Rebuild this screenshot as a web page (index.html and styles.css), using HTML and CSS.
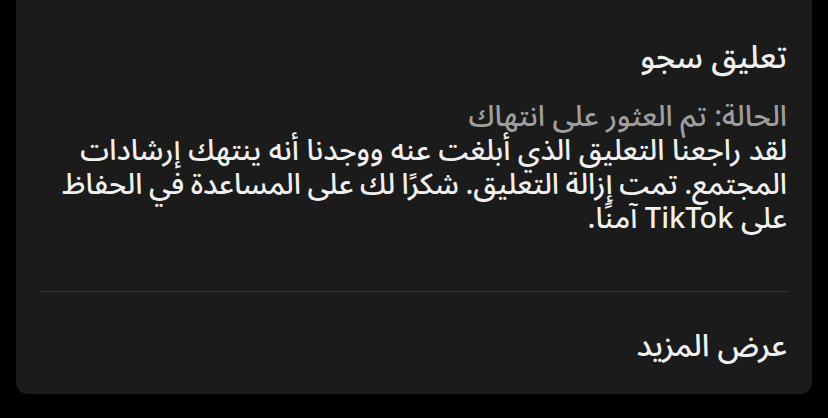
FILE: index.html
```html
<!DOCTYPE html>
<html lang="ar" dir="rtl">
<head>
<meta charset="utf-8">
<link rel="stylesheet" href="styles.css">
</head>
<body>
<div class="card">
  <div class="content">
    <h1 class="title">تعليق سجو</h1>
    <p class="status">الحالة: تم العثور على انتهاك</p>
    <p class="body"><span class="line">لقد راجعنا التعليق الذي أبلغت عنه ووجدنا أنه ينتهك إرشادات</span><span class="line tight">المجتمع. تمت إزالة التعليق. شكرًا لك على المساعدة في الحفاظ</span><span class="line">على TikTok آمنًا.</span></p>
  </div>
  <div class="divider"></div>
  <div class="more">عرض المزيد</div>
</div>
</body>
</html>
```
FILE: styles.css
```css
html, body {
  margin: 0;
  padding: 0;
  background: #000;
}
body {
  width: 828px;
  height: 418px;
  overflow: hidden;
  font-family: "Noto Sans Arabic", "DejaVu Sans", "Noto Sans", sans-serif;
  color: #f0f0f0;
}
.card {
  margin: -10px 16px 0 16px;
  height: 404px;
  background: #1b1b1b;
  border-radius: 12px;
  display: flex;
  flex-direction: column;
}
.content {
  padding: 48px 25px 0 10px;
  box-sizing: border-box;
}
.title {
  margin: 0;
  font-size: 32px;
  font-weight: 500;
  line-height: 40px;
  white-space: nowrap;
}
.status {
  margin: 22px 0 0 0;
  font-size: 29px;
  font-weight: 500;
  line-height: 34px;
  color: #9e9e9e;
  white-space: nowrap;
}
.body {
  margin: 0;
  font-size: 29px;
  font-weight: 500;
  line-height: 34px;
  color: #f0f0f0;
  white-space: nowrap;
}
.line {
  display: block;
}
.tight {
  word-spacing: -1px;
}
.divider {
  height: 1px;
  background: #383838;
  margin: 55px 24px 0 24px;
}
.more {
  padding: 38px 25px 0 24px;
  font-size: 31px;
  font-weight: 500;
  line-height: 32px;
  color: #f0f0f0;
}
```
